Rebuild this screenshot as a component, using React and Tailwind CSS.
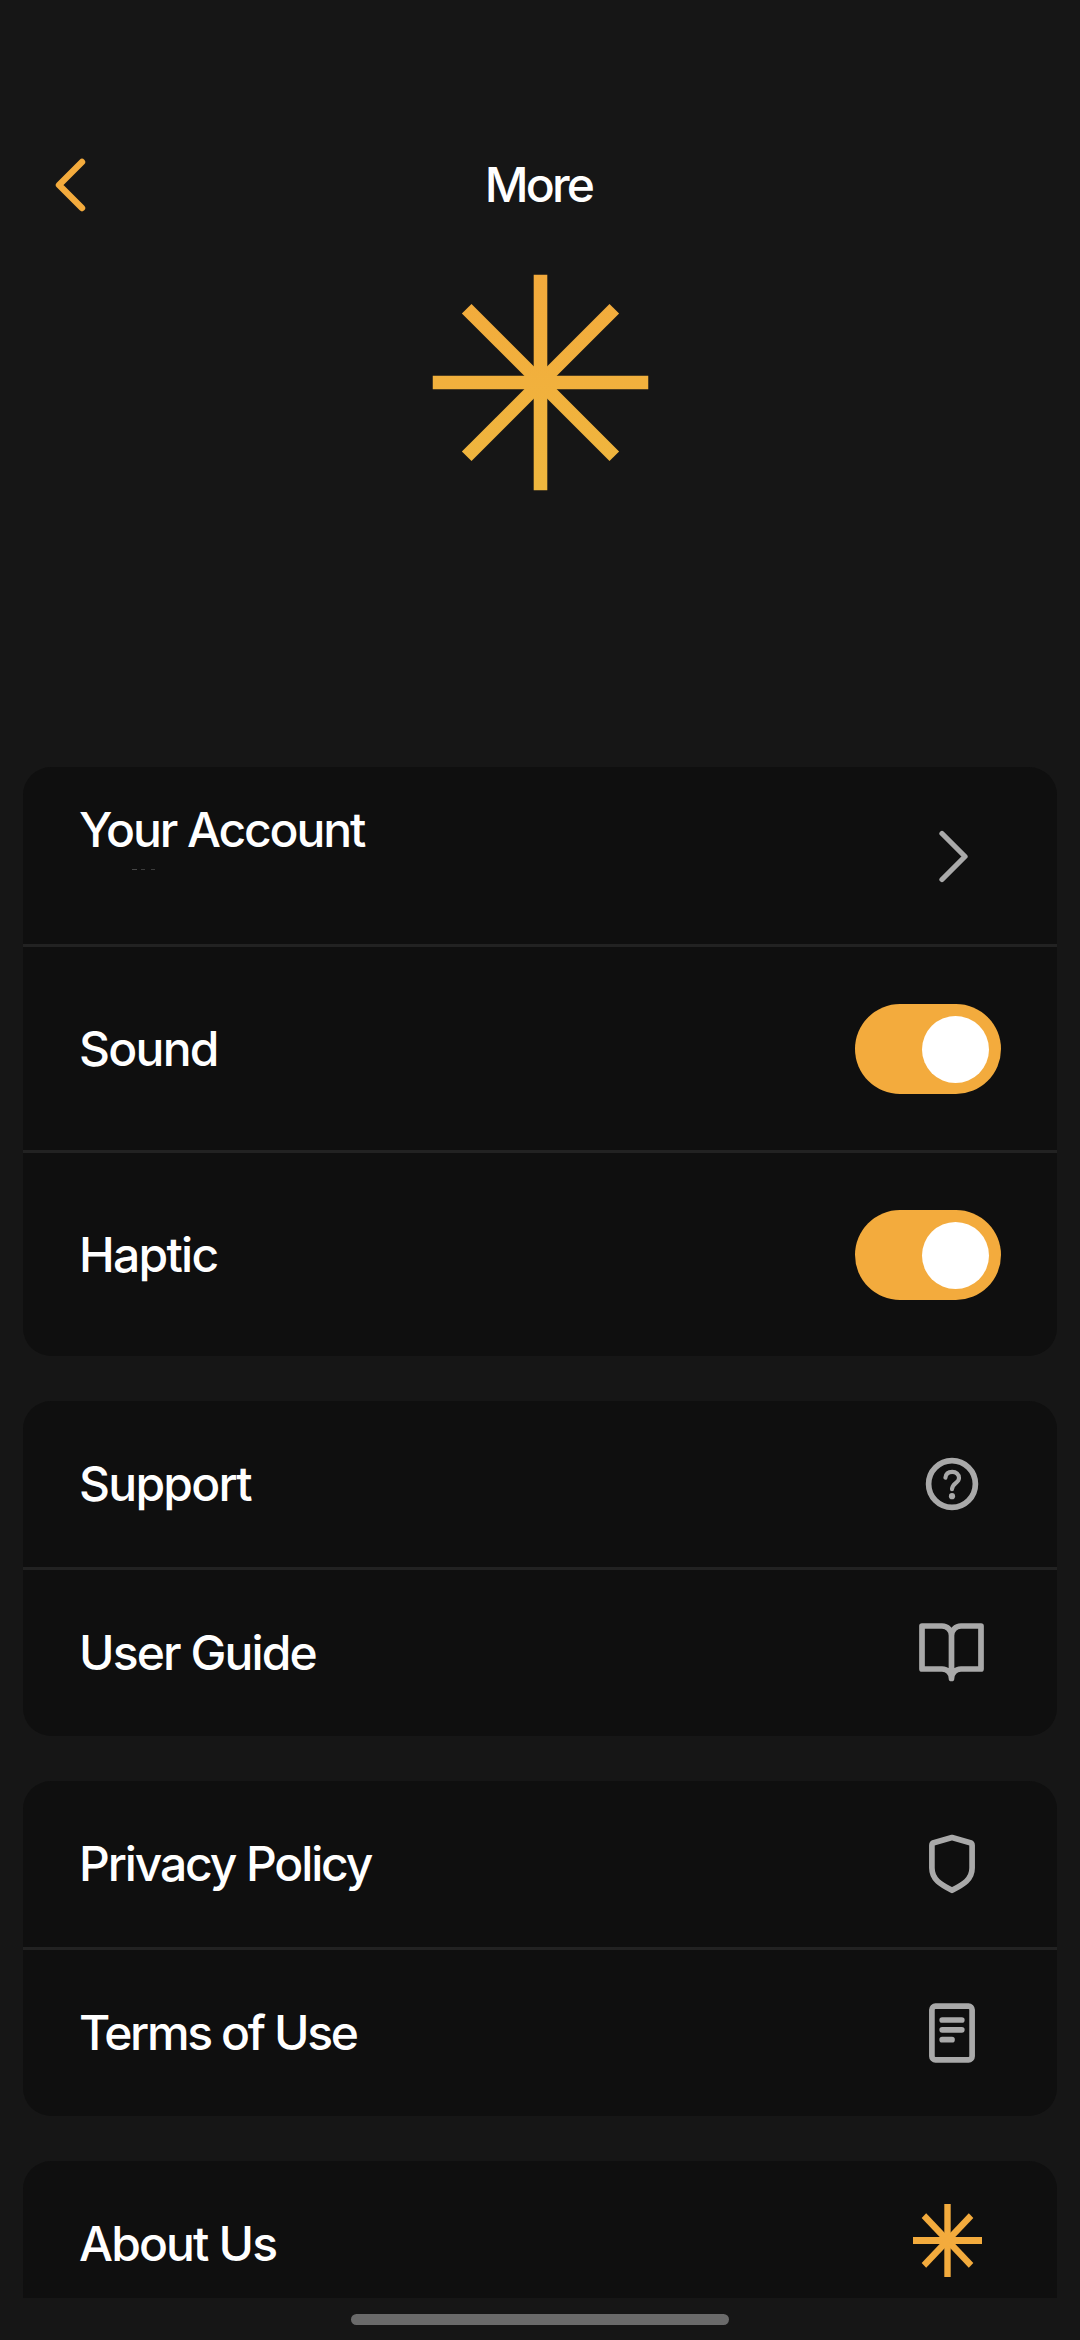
import { useState } from "react";

const Icon = ({ children }) => (
  <svg
    viewBox="-49 -49 98 98"
    className="h-[98px] w-[98px] shrink-0"
    fill="none"
    stroke="#a9a9a9"
    strokeWidth="5.7"
    strokeLinecap="round"
    strokeLinejoin="round"
  >
    {children}
  </svg>
);

const ChevronIcon = () => (
  <Icon>
    <path d="M-10 -22.5L13 0.5L-10 23.5" strokeWidth="5.3" />
  </Icon>
);

const HelpIcon = () => (
  <Icon>
    <circle r="23.4" />
    <path d="M-6.6 -6.2C-6.2 -10.2 -3.6 -12.1 0.2 -12.1C4.2 -12.1 7 -9.6 7 -6C7 -1 0 -0.5 0 5.2" strokeWidth="4.1" />
    <circle cy="12.2" r="3.1" fill="#a9a9a9" stroke="none" />
  </Icon>
);

const BookIcon = () => (
  <Icon>
    <path d="M-0.5 25.5V-17.5C-0.5 -22.5 -4.5 -27 -10 -27H-30V16H-10C-4.5 16 -0.5 20 -0.5 25.5C-0.5 20 3.5 16 9 16H29V-27H9C3.5 -27 -0.5 -22.5 -0.5 -17.5" />
  </Icon>
);

const ShieldIcon = () => (
  <Icon>
    <path d="M0 -26.5L-18.2 -21.3Q-20.1 -20.6 -20.1 -18.6V4C-20.1 15.5 -11.5 20.3 0 26.3C11.5 20.3 20.1 15.5 20.1 4V-18.6Q20.1 -20.6 18.2 -21.3Z" />
  </Icon>
);

const DocumentIcon = () => (
  <Icon>
    <rect x="-20.1" y="-26.8" width="40.2" height="53.6" rx="3.6" />
    <path d="M-9.8 -13H9.8M-9.8 -3.2H9.8M-9.8 6.7H0" />
  </Icon>
);

const Star = ({ className, stroke, strokeWidth }) => (
  <svg viewBox="0 0 216 216" preserveAspectRatio="none" className={className} fill="none" strokeWidth={strokeWidth}>
    <defs>
      <linearGradient id="starFill" gradientUnits="userSpaceOnUse" x1="0" y1="0" x2="0" y2="216">
        <stop offset="0" stopColor="#f3aa3c" />
        <stop offset="1" stopColor="#efb73e" />
      </linearGradient>
    </defs>
    <g stroke={stroke}>
      <path d="M108 0V216" />
      <path d="M0 108H216" />
      <path d="M34.2 34.2L181.8 181.8" />
      <path d="M181.8 34.2L34.2 181.8" />
    </g>
  </svg>
);

const Toggle = ({ label, checked, onChange }) => (
  <button
    type="button"
    role="switch"
    aria-label={label}
    aria-checked={checked}
    onClick={() => onChange(!checked)}
    className={`mt-px flex h-[90px] w-[146px] items-center rounded-full px-3 ${
      checked ? "justify-end bg-[#f3ab3d]" : "justify-start bg-neutral-700"
    }`}
  >
    <span className="mt-px h-[67px] w-[67px] rounded-full bg-white" />
  </button>
);

const Card = ({ children }) => (
  <section className="shrink-0 divide-y-3 divide-[#222222] overflow-hidden rounded-[28px] bg-[#0f0f0f]">{children}</section>
);

const Row = ({ label, labelClass = "tracking-[-0.039em]", children }) => (
  <div className="box-content flex h-[166px] items-center justify-between px-14">
    <span className={labelClass}>{label}</span>
    {children}
  </div>
);

const ToggleRow = ({ label, checked, onChange }) => (
  <div className="box-content flex h-[203px] items-center justify-between px-14">
    <span className="tracking-[-0.036em]">{label}</span>
    <Toggle label={label} checked={checked} onChange={onChange} />
  </div>
);

const App = () => {
  const [settings, setSettings] = useState({ sound: true, haptic: true });

  const update = (name, value) => {
    setSettings((prev) => ({ ...prev, [name]: value }));
  };

  return (
    <div className="flex h-[2340px] w-[1080px] flex-col overflow-hidden bg-[#161616] font-['Inter',sans-serif] text-[48px] leading-[56px] font-medium tracking-[-0.044em] text-white">
      <header className="mt-[135px] grid h-[100px] shrink-0 grid-cols-[1fr_auto_1fr] items-center px-[46px]">
        <button type="button" aria-label="Back" className="w-12">
          <svg viewBox="0 0 48 60" className="h-[60px] w-12" fill="none" stroke="#f3ab3d" strokeWidth="6.4" strokeLinecap="round" strokeLinejoin="round">
            <path d="M36 7L13 30L36 53" />
          </svg>
        </button>
        <h1 className="pr-[3px] tracking-[-0.058em]">More</h1>
      </header>

      <div className="flex h-[532px] shrink-0 justify-center pt-[39px]">
        <Star className="h-[216px] w-[216px] translate-x-[0.5px] translate-y-[0.5px]" stroke="url(#starFill)" strokeWidth="13.6" />
      </div>

      <main className="flex h-[1531px] shrink-0 flex-col gap-[45px] overflow-hidden px-[23px]">
        <Card>
          <div className="box-content flex h-[177px] items-center justify-between px-14">
            <div className="h-full pt-[35px]">
              <p>Your Account</p>
              <div aria-hidden="true" className="mt-[11px] ml-[53px] flex h-px">
                <i className="mr-1 w-[5px] bg-[#484848]" />
                <i className="mr-1.5 w-1 bg-[#3c3c3c]" />
                <i className="w-1 bg-[#3c3c3c]" />
              </div>
            </div>
            <ChevronIcon />
          </div>
          <ToggleRow label="Sound" checked={settings.sound} onChange={(value) => update("sound", value)} />
          <ToggleRow label="Haptic" checked={settings.haptic} onChange={(value) => update("haptic", value)} />
        </Card>

        <Card>
          <Row label="Support" labelClass="tracking-[-0.036em]">
            <HelpIcon />
          </Row>
          <Row label="User Guide">
            <BookIcon />
          </Row>
        </Card>

        <Card>
          <Row label="Privacy Policy" labelClass="tracking-[-0.044em]">
            <ShieldIcon />
          </Row>
          <Row label="Terms of Use" labelClass="tracking-[-0.049em]">
            <DocumentIcon />
          </Row>
        </Card>

        <Card>
          <Row label="About Us">
            <Star className="mr-[19px] mb-[7px] h-[73px] w-[69px]" stroke="#f3ab3d" strokeWidth="20" />
          </Row>
        </Card>
      </main>

      <div className="mt-4 h-[11px] w-[378px] shrink-0 self-center rounded-full bg-[#6a6a6a]" />
    </div>
  );
};

export default App;
